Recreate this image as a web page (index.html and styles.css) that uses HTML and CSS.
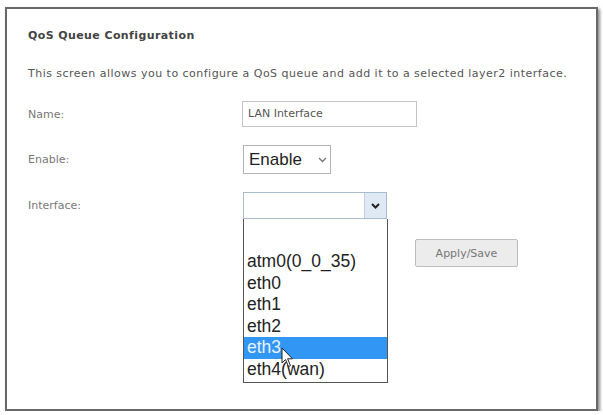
FILE: index.html
```html
<!DOCTYPE html>
<html lang="en">
  <head>
    <meta charset="UTF-8" />
    <title>QoS Queue Configuration</title>
    <link rel="stylesheet" href="styles.css">
  </head>
  <body>
    <div class="panel">
      <div class="title">QoS Queue Configuration</div>
      <div class="intro">This screen allows you to configure a QoS queue and add it to a selected layer2 interface.</div>

      <div class="row name-row">
        <label class="label">Name:</label>
        <div class="text-box">LAN Interface</div>
      </div>
      <div class="row enable-row">
        <label class="label">Enable:</label>
        <div class="select enable-select">
          <span>Enable</span>
          <svg class="chev" width="9" height="6" viewBox="0 0 9 6"><path d="M1 1 L4.5 4.5 L8 1" fill="none" stroke="#777" stroke-width="1.4"/></svg>
        </div>
      </div>
      <div class="row iface-row">
        <label class="label">Interface:</label>
        <div class="iface-wrap">
          <div class="select iface-select">
            <span class="value"></span>
            <span class="arrow">
              <svg width="9" height="6" viewBox="0 0 9 6"><path d="M1 1 L4.5 4.5 L8 1" fill="none" stroke="#222" stroke-width="2"/></svg>
            </span>
          </div>
          <ul class="options">
            <li class="blank"></li>
            <li>atm0(0_0_35)</li>
            <li>eth0</li>
            <li>eth1</li>
            <li>eth2</li>
            <li class="active">eth3</li>
            <li>eth4(wan)</li>
          </ul>
          <!-- mouse pointer hovering the list -->
          <svg class="pointer" width="13" height="21" viewBox="0 0 13 21">
            <path d="M1 1 L1 16 L4.5 12.5 L7.5 19.5 L9.5 18.6 L6.6 11.8 L11.5 11.8 Z" fill="#fff" stroke="#222" stroke-width="1"/>
          </svg>
        </div>
      </div>
      <div class="row button-row">
        <button type="button" class="apply-btn">Apply/Save</button>
      </div>
    </div>
  </body>
</html>
```

FILE: styles.css
```css
body {
  margin: 0;
  background: #fff;
  font-family: "DejaVu Sans", "Liberation Sans", sans-serif;
}
.panel {
  position: relative;
  margin: 7px 0 0 5px;
  width: 593px;
  height: 404px;
  box-sizing: border-box;
  border: 2px solid #686868;
  box-shadow: 2px 2px 3px rgba(0, 0, 0, 0.45);
  padding: 19px 21px 0 21px;
  background: #fff;
}
.title {
  height: 16px;
  line-height: 16px;
  font-size: 11px;
  letter-spacing: 0.4px;
  font-weight: bold;
  color: #444;
}
.intro {
  margin-top: 22px;
  height: 16px;
  line-height: 16px;
  font-size: 11px;
  letter-spacing: 0.48px;
  color: #555;
}
.row {
  display: flex;
  align-items: center;
}
.label {
  width: 214px;
  flex: none;
  font-size: 11px;
  color: #777;
}
.name-row {
  margin-top: 19px;
  height: 26px;
}
.text-box {
  width: 175px;
  height: 26px;
  box-sizing: border-box;
  border: 1px solid #c4c4c4;
  padding-left: 5px;
  font-size: 11px;
  line-height: 24px;
  color: #555;
}
.enable-row {
  margin-top: 18px;
  height: 29px;
}
.select {
  box-sizing: border-box;
  display: flex;
  align-items: center;
  background: #fff;
}
.enable-select {
  margin-left: 1px;
  width: 88px;
  height: 29px;
  border: 1px solid #b4b4b4;
  padding-left: 5px;
  font-family: "Liberation Sans", sans-serif;
  font-size: 17px;
  color: #222;
}
.enable-select .chev {
  margin-left: 16px;
}
.iface-row {
  margin-top: 18px;
  height: 27px;
  align-items: flex-start;
}
.iface-row .label {
  line-height: 27px;
}
.iface-wrap {
  position: relative;
  margin-left: 1px;
}
.iface-select {
  width: 144px;
  height: 27px;
  border: 1px solid #a9bccf;
}
.iface-select .value {
  flex: 1;
}
.iface-select .arrow {
  width: 21px;
  height: 100%;
  border-left: 1px solid #c3d2e2;
  background: #dfe9f4;
  display: flex;
  align-items: center;
  justify-content: center;
}
.options {
  position: absolute;
  top: 27px;
  left: 0;
  width: 145px;
  box-sizing: border-box;
  margin: 0;
  padding: 0 0 2px 0;
  list-style: none;
  border: 1px solid #555;
  border-top: none;
  background: #fff;
  font-family: "Liberation Sans", sans-serif;
  font-size: 17.5px;
  color: #222;
  z-index: 2;
}
.options li {
  height: 21.5px;
  line-height: 21.5px;
  padding-left: 3px;
}
.options li.blank {
  height: 32px;
}
.options li.active {
  background: #3296f4;
  color: #e8f3ff;
}
.pointer {
  position: absolute;
  left: 38px;
  top: 155px;
  z-index: 3;
}
.button-row {
  margin-top: 20px;
}
.apply-btn {
  margin-left: 387px;
  width: 103px;
  height: 28px;
  border: 1px solid #bdbdbd;
  border-radius: 2px;
  background: #ececec;
  font-family: "DejaVu Sans", sans-serif;
  font-size: 11px;
  color: #777;
  padding: 0;
}
```
